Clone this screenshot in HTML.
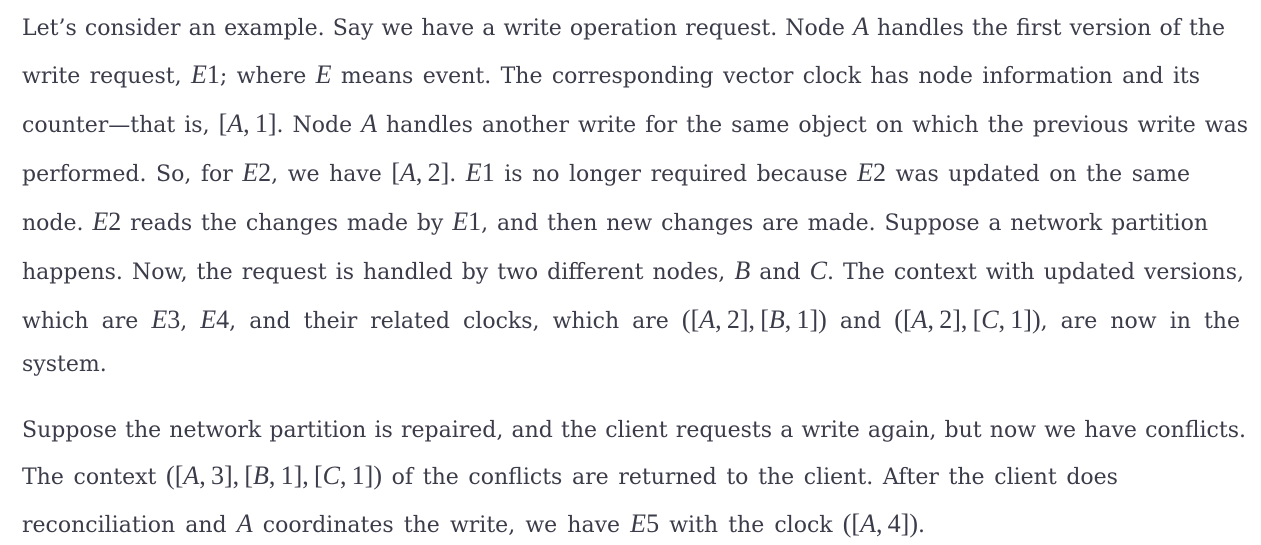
<!DOCTYPE html>
<html><head><meta charset="utf-8"><style>
body{margin:0;background:#fff;width:1261px;height:545px;overflow:hidden;position:relative}
.l{position:absolute;left:22px;height:30px;line-height:30px;font-family:"DejaVu Serif","Liberation Serif",serif;font-size:22px;color:#3b3c4a;white-space:nowrap;text-align:justify;text-align-last:justify}
.l.n{text-align-last:left}
i{font-family:"Liberation Serif",serif;font-size:26px;font-style:italic}
b{font-family:"Liberation Serif",serif;font-size:26px;font-weight:normal}
</style></head><body>
<div class="l" style="top:12px;width:1203px">Let’s consider an example. Say we have a write operation request. Node <i>A</i> handles the first version of the</div>
<div class="l" style="top:60px;width:1178px">write request, <i>E</i><b>1</b>; where <i>E</i> means event. The corresponding vector clock has node information and its</div>
<div class="l" style="top:109px;width:1226px">counter—that is, <b>[</b><i>A</i><b>,&#8201;1]</b>. Node <i>A</i> handles another write for the same object on which the previous write was</div>
<div class="l" style="top:158px;width:1168px">performed. So, for <i>E</i><b>2</b>, we have <b>[</b><i>A</i><b>,&#8201;2]</b>. <i>E</i><b>1</b> is no longer required because <i>E</i><b>2</b> was updated on the same</div>
<div class="l" style="top:207px;width:1186px">node. <i>E</i><b>2</b> reads the changes made by <i>E</i><b>1</b>, and then new changes are made. Suppose a network partition</div>
<div class="l" style="top:256px;width:1222px">happens. Now, the request is handled by two different nodes, <i>B</i> and <i>C</i>. The context with updated versions,</div>
<div class="l" style="top:305px;width:1218px">which are <i>E</i><b>3</b>, <i>E</i><b>4</b>, and their related clocks, which are <b>([</b><i>A</i><b>,&#8201;2],&#8201;[</b><i>B</i><b>,&#8201;1])</b> and <b>([</b><i>A</i><b>,&#8201;2],&#8201;[</b><i>C</i><b>,&#8201;1])</b>, are now in the</div>
<div class="l n" style="top:350px">system.</div>
<div class="l" style="top:416px;width:1224px">Suppose the network partition is repaired, and the client requests a write again, but now we have conflicts.</div>
<div class="l" style="top:461px;width:1096px">The context <b>([</b><i>A</i><b>,&#8201;3],&#8201;[</b><i>B</i><b>,&#8201;1],&#8201;[</b><i>C</i><b>,&#8201;1])</b> of the conflicts are returned to the client. After the client does</div>
<div class="l" style="top:509px;width:903px">reconciliation and <i>A</i> coordinates the write, we have <i>E</i><b>5</b> with the clock <b>([</b><i>A</i><b>,&#8201;4])</b>.</div>
</body></html>
